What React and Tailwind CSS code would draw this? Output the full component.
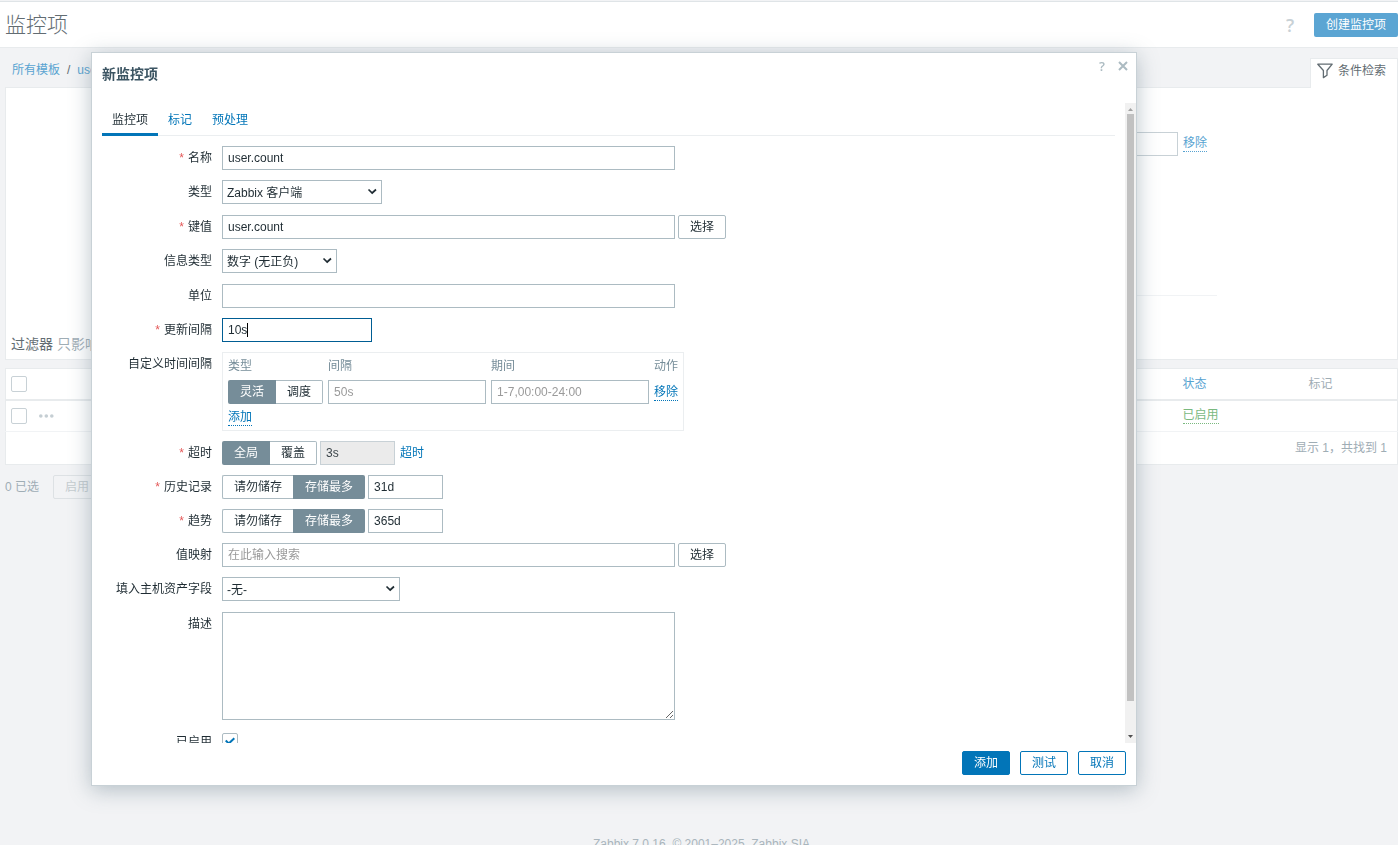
import React from 'react';

const TEXT_INPUT = 'h-6 border border-[#acbbc2] bg-white px-[5px] text-[#1f2c33] outline-none placeholder:text-[#9a9a9a]';

const Field = ({ label, htmlFor, required = false, tall = false, children }) => (
  <>
    <label htmlFor={htmlFor} className="text-right leading-6">
      {required && <span className="mr-1 text-[#e45959]">*</span>}
      {label}
    </label>
    <div className={tall ? 'flex min-h-[25px] items-start gap-[3px]' : 'flex items-start gap-[3px]'}>{children}</div>
  </>
);

const Select = ({ id, value, className }) => (
  <div className={`relative h-6 ${className}`}>
    <select id={id} defaultValue={value} className="h-6 w-full appearance-none border border-[#acbbc2] bg-white px-1 pt-0.5 text-[#1f2c33] outline-none">
      <option>{value}</option>
    </select>
    <svg className="pointer-events-none absolute right-1 top-[7px]" width="11" height="9" viewBox="0 0 11 9" fill="none">
      <path d="M1.5 2.5 5.2 6 9 2.5" stroke="#1f2c33" strokeWidth="1.7" />
    </svg>
  </div>
);

// Two-way radio switch; the border is only drawn around the unselected side.
const Segmented = ({ name, options, active }) => (
  <div className="flex h-6" role="radiogroup">
    {options.map((option, i) => (
      <label key={option} className="flex">
        <input type="radio" name={name} defaultChecked={i === active} className="sr-only" />
        <span
          className={
            i === active
              ? `bg-[#768d99] px-3 leading-6 text-white ${i === 0 ? 'rounded-l-xs' : 'rounded-r-xs'}`
              : `border-y border-[#acbbc2] bg-white px-[11px] leading-[22px] ${i === 0 ? 'rounded-l-xs border-l' : 'rounded-r-xs border-r'}`
          }
        >
          {option}
        </span>
      </label>
    ))}
  </div>
);

const SelectButton = () => (
  <button className="h-6 rounded-xs border border-[#acbbc2] bg-white px-[11px] leading-[22px] text-[#1f2c33]">选择</button>
);

const DottedLink = ({ children, className }) => (
  <a href="#" className={`inline-block border-b border-dotted leading-[15px] ${className}`}>
    {children}
  </a>
);

const IntervalTable = () => (
  <div className="border border-[#ebeef0] pr-[5px]">
    <table>
      <thead>
        <tr className="h-6 text-left text-[#768d99]">
          <th className="p-0 pl-[5px] pt-0.5 font-normal">类型</th>
          <th className="p-0 pl-[5px] pt-0.5 font-normal">间隔</th>
          <th className="p-0 pl-[5px] pt-0.5 font-normal">期间</th>
          <th className="p-0 pl-[5px] pt-0.5 font-normal">动作</th>
        </tr>
      </thead>
      <tbody>
        <tr className="h-[30px]">
          <td className="p-0 pl-[5px]">
            <Segmented name="interval-type" options={['灵活', '调度']} active={0} />
          </td>
          <td className="p-0 pl-[5px]">
            <input aria-label="间隔" placeholder="50s" className={`block w-[158px] ${TEXT_INPUT}`} />
          </td>
          <td className="p-0 pl-[5px]">
            <input aria-label="期间" placeholder="1-7,00:00-24:00" className={`block w-[158px] ${TEXT_INPUT}`} />
          </td>
          <td className="p-0 pl-[5px]">
            <DottedLink className="text-[#0275b8]">移除</DottedLink>
          </td>
        </tr>
        <tr className="h-[23px]">
          <td colSpan={4} className="p-0 pb-[3px] pl-[5px]">
            <DottedLink className="text-[#0275b8]">添加</DottedLink>
          </td>
        </tr>
      </tbody>
    </table>
  </div>
);

const ItemForm = () => (
  <form className="grid grid-cols-[110px_1fr] gap-[10px] pt-[10px]">
    <Field label="名称" htmlFor="name" required>
      <input id="name" defaultValue="user.count" className={`w-[453px] ${TEXT_INPUT}`} />
    </Field>
    <Field label="类型" htmlFor="type" tall>
      <Select id="type" value="Zabbix 客户端" className="w-40" />
    </Field>
    <Field label="键值" htmlFor="key" required>
      <input id="key" defaultValue="user.count" className={`w-[453px] ${TEXT_INPUT}`} />
      <SelectButton />
    </Field>
    <Field label="信息类型" htmlFor="value-type" tall>
      <Select id="value-type" value="数字 (无正负)" className="w-[115px]" />
    </Field>
    <Field label="单位" htmlFor="units">
      <input id="units" className={`w-[453px] ${TEXT_INPUT}`} />
    </Field>
    <Field label="更新间隔" htmlFor="delay" required>
      <div className="relative">
        <input
          id="delay"
          defaultValue="10s"
          className="block h-6 w-[150px] border border-[#005d93] bg-white px-[5px] text-[#1f2c33] caret-transparent outline-none"
        />
        <span className="absolute left-[25px] top-[5px] h-[14px] w-px bg-black" />
      </div>
    </Field>
    <Field label="自定义时间间隔">
      <IntervalTable />
    </Field>
    <Field label="超时" htmlFor="timeout" required>
      <Segmented name="timeout-mode" options={['全局', '覆盖']} active={0} />
      <input id="timeout" defaultValue="3s" readOnly className="h-6 w-[75px] border border-[#c8d1d6] bg-[#ebebeb] px-[5px] text-[#3d464b] outline-none" />
      <a href="#" className="ml-0.5 leading-6 text-[#0275b8]">超时</a>
    </Field>
    <Field label="历史记录" htmlFor="history" required>
      <Segmented name="history-mode" options={['请勿储存', '存储最多']} active={1} />
      <input id="history" defaultValue="31d" className={`w-[75px] ${TEXT_INPUT}`} />
    </Field>
    <Field label="趋势" htmlFor="trends" required>
      <Segmented name="trends-mode" options={['请勿储存', '存储最多']} active={1} />
      <input id="trends" defaultValue="365d" className={`w-[75px] ${TEXT_INPUT}`} />
    </Field>
    <Field label="值映射" htmlFor="valuemap">
      <input id="valuemap" placeholder="在此输入搜索" className={`w-[453px] ${TEXT_INPUT}`} />
      <SelectButton />
    </Field>
    <Field label="填入主机资产字段" htmlFor="inventory" tall>
      <Select id="inventory" value="-无-" className="w-[178px]" />
    </Field>
    <Field label="描述" htmlFor="description">
      <textarea id="description" className="block h-[108px] w-[453px] resize border border-[#acbbc2] bg-white outline-none" />
    </Field>
    <Field label="已启用" htmlFor="enabled">
      <div className="relative pt-[3px]">
        <input id="enabled" type="checkbox" defaultChecked className="block size-4 appearance-none rounded-xs border border-[#acbbc2] bg-white" />
        <svg className="pointer-events-none absolute left-[3px] top-[7px]" width="10" height="8" viewBox="0 0 10 8" fill="none">
          <path d="M0.7 3.5 3.8 6.5 9.3 1.2" stroke="#0275b8" strokeWidth="2" />
        </svg>
      </div>
    </Field>
  </form>
);

const Scrollbar = () => (
  <div className="flex w-[11px] shrink-0 flex-col items-center bg-[#f1f1f1]">
    <svg width="11" height="11" viewBox="0 0 11 11" className="shrink-0">
      <path d="M3 8 5.5 5 8 8Z" fill="#a3a3a3" />
    </svg>
    <div className="min-h-0 w-[7px] flex-1 bg-[#c1c1c1]" />
    <div className="h-[31px] shrink-0" />
    <svg width="11" height="11" viewBox="0 0 11 11" className="shrink-0">
      <path d="M3 3 8 3 5.5 6Z" fill="#505050" />
    </svg>
  </div>
);

const ItemDialog = () => (
  <div
    role="dialog"
    aria-label="新监控项"
    className="fixed bottom-[59px] left-[91px] right-[261px] top-[52px] flex flex-col border border-[#c8d1d6] bg-white shadow-[0_4px_20px_0_rgba(104,127,139,0.45)]"
  >
    <div className="flex h-[50px] shrink-0 items-start pl-[10px] pr-1.5">
      <h4 className="mt-[11px] flex-1 text-sm font-bold leading-5 text-[#3c5563]">新监控项</h4>
      <button aria-label="帮助" className="mt-1 w-4 font-['Open_Sans',sans-serif] text-[13px] font-semibold leading-[18px] text-[#acbbc2]">?</button>
      <button aria-label="关闭" className="ml-1.5 mt-1.5 p-0.5 text-[#acbbc2]">
        <svg width="10" height="10" viewBox="0 0 10 10" fill="none">
          <path d="M1 1 9 9M9 1 1 9" stroke="currentColor" strokeWidth="2" />
        </svg>
      </button>
    </div>

    <div className="flex min-h-0 flex-1">
      <div className="min-w-0 flex-1 overflow-hidden px-[10px]">
        <div className="flex h-[33px] border-b border-[#ebeef0]" role="tablist">
          <button role="tab" aria-selected className="h-[33px] border-b-3 border-[#0275b8] px-[10px] pt-1">监控项</button>
          <button role="tab" className="px-[10px] pt-0.5 text-[#0275b8]">标记</button>
          <button role="tab" className="px-[10px] pt-0.5 text-[#0275b8]">预处理</button>
        </div>
        <ItemForm />
      </div>
      <Scrollbar />
    </div>

    <div className="flex shrink-0 justify-end gap-[10px] px-[10px] pb-[10px] pt-2">
      <button className="h-6 rounded-xs border border-[#0275b8] bg-[#0275b8] px-[11px] leading-[22px] text-white">添加</button>
      <button className="h-6 rounded-xs border border-[#0275b8] bg-white px-[11px] leading-[22px] text-[#0275b8]">测试</button>
      <button className="h-6 rounded-xs border border-[#0275b8] bg-white px-[11px] leading-[22px] text-[#0275b8]">取消</button>
    </div>
  </div>
);

const RowCheckbox = ({ label }) => (
  <input type="checkbox" aria-label={label} className="block size-4 appearance-none rounded-xs border border-[#c8d1d6] bg-white" />
);

const FilterPanel = () => (
  <>
    <div className="flex h-[39px] items-end">
      <nav className="flex h-[34px] flex-1 items-center gap-[7px] pl-[7px]">
        <a href="#" className="text-[#58a3d1]">所有模板</a>
        <span>/</span>
        <a href="#" className="text-[#58a3d1]">user</a>
      </nav>
      <button className="z-[1] -mb-px flex h-[30px] items-center gap-[5px] border border-b-0 border-[#e8ebed] bg-white pb-1.5 pl-1.5 pr-[11px]">
        <svg width="16" height="16" viewBox="0 0 16 16" fill="none">
          <path d="M0.8 1.2H15.2L10 7.5V12.2L6.4 14.6V7.5Z" stroke="#626c72" strokeWidth="1.3" strokeLinejoin="round" />
        </svg>
        条件检索
      </button>
    </div>
    <div className="flex h-[273px] flex-col border border-[#e8ebed] bg-white">
      <div className="ml-[50%] flex items-center gap-[5px] pr-[190px] pt-11">
        <input aria-label="值" className="h-6 min-w-0 flex-1 border border-[#c8d1d6] bg-white" />
        <DottedLink className="text-[#58a3d1]">移除</DottedLink>
      </div>
      <hr className="ml-[180px] mr-[180px] mt-[139px] border-[#f1f3f5]" />
      <div className="mt-[37px] pl-[5px] text-sm leading-[22px] text-[#9fadb5]">
        <span className="text-[#626c72]">过滤器</span> 只影响
      </div>
    </div>
  </>
);

const ItemsTable = () => (
  <table className="mt-2 w-full table-fixed border border-[#e8ebed] bg-white">
    <colgroup>
      <col className="w-7" />
      <col />
      <col className="w-[126px]" />
      <col className="w-[94px]" />
    </colgroup>
    <thead>
      <tr className="h-[31px] border-b-2 border-[#e8ebed] text-left">
        <th className="px-[5px]"><RowCheckbox label="全选" /></th>
        <th />
        <th className="px-[5px] font-normal"><a href="#" className="text-[#58a3d1]">状态</a></th>
        <th className="px-[5px] font-normal text-[#9fadb5]">标记</th>
      </tr>
    </thead>
    <tbody>
      <tr className="h-8 border-b border-[#f1f3f5]">
        <td className="px-[5px]"><RowCheckbox label="选择" /></td>
        <td className="px-[5px]">
          <button aria-label="更多" className="block">
            <svg width="15" height="4" viewBox="0 0 15 4" fill="#c5ced3">
              <circle cx="1.8" cy="2" r="1.8" />
              <circle cx="7.3" cy="2" r="1.8" />
              <circle cx="12.8" cy="2" r="1.8" />
            </svg>
          </button>
        </td>
        <td className="px-[5px]"><DottedLink className="text-[#7ab97f]">已启用</DottedLink></td>
        <td />
      </tr>
      <tr className="h-[33px]">
        <td colSpan={4} className="px-[10px] text-right text-[#9fadb5]">显示 1，共找到 1</td>
      </tr>
    </tbody>
  </table>
);

export default function App() {
  return (
    <div className="flex h-screen flex-col overflow-hidden bg-[#f2f3f5] font-['Liberation_Sans','Noto_Sans_CJK_SC',sans-serif] text-xs text-[#626c72]">
      <header className="mt-px flex h-[47px] shrink-0 items-center border-y border-t-[#dfe4e7] border-b-[#e8ebed] bg-white pl-[5px]">
        <h1 className="flex-1 text-[21px] font-light leading-8">监控项</h1>
        <button aria-label="帮助" className="mr-4 w-4 font-['Open_Sans',sans-serif] text-lg font-semibold text-[#c8d1d6]">?</button>
        <button className="h-6 rounded-xs bg-[#5ba5d3] px-3 leading-6 text-white">创建监控项</button>
      </header>
      <main className="flex-1 pl-[5px]">
        <FilterPanel />
        <ItemsTable />
        <div className="mt-[10px] flex items-center gap-[14px] text-[#9fadb5]">
          <span>0 已选</span>
          <button disabled className="h-6 rounded-xs border border-[#dde1e4] px-[11px] leading-[22px] text-[#c5ccd0]">启用</button>
        </div>
      </main>
      <footer className="h-[9px] shrink-0 pl-[5px] text-center leading-4 text-[#a9b5bc]">Zabbix 7.0.16. © 2001–2025, Zabbix SIA</footer>
      <div className="text-[#1f2c33]">
        <ItemDialog />
      </div>
    </div>
  );
}
